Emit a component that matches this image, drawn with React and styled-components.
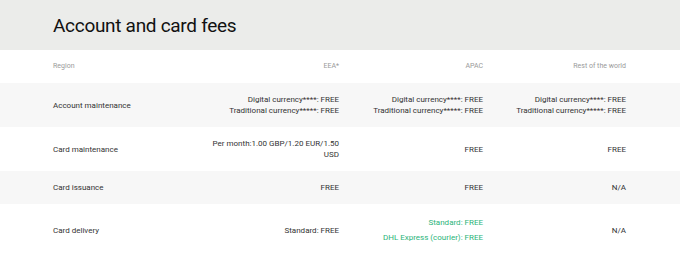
import React from 'react';
import styled, { createGlobalStyle } from 'styled-components';

const rows = [
  {
    label: 'Account maintenance',
    striped: true,
    cells: [
      ['Digital currency****: FREE', 'Traditional currency*****: FREE'],
      ['Digital currency****: FREE', 'Traditional currency*****: FREE'],
      ['Digital currency****: FREE', 'Traditional currency*****: FREE'],
    ],
  },
  {
    label: 'Card maintenance',
    cells: [['Per month:1.00 GBP/1.20 EUR/1.50', 'USD'], ['FREE'], ['FREE']],
  },
  {
    label: 'Card issuance',
    striped: true,
    cells: [['FREE'], ['FREE'], ['N/A']],
  },
  {
    label: 'Card delivery',
    cells: [['Standard: FREE'], ['Standard: FREE', 'DHL Express (courier): FREE'], ['N/A']],
    green: [false, true, false],
  },
];

function App() {
  return (
    <>
      <GlobalStyle />
      <Banner>
        <Title>Account and card fees</Title>
      </Banner>
      <Row>
        <HeadCell>Region</HeadCell>
        <HeadCell $right>EEA*</HeadCell>
        <HeadCell $right>APAC</HeadCell>
        <HeadCell $right>Rest of the world</HeadCell>
      </Row>
      {rows.map((row) => (
        <Row key={row.label} $striped={row.striped}>
          <Label>{row.label}</Label>
          {row.cells.map((lines, i) => {
            const green = row.green && row.green[i];
            return (
              <Cell key={i} $green={green}>
                {lines.map((line) => (
                  <Line key={line} $green={green}>{line}</Line>
                ))}
              </Cell>
            );
          })}
        </Row>
      ))}
    </>
  );
}

export default App;

const GlobalStyle = createGlobalStyle`
  body {
    margin: 0;
    background: #fff;
    font-family: Roboto, 'Liberation Sans', sans-serif;
    color: #333;
  }
`;

const Banner = styled.div`
  background: #ebecea;
  height: 50px;
  padding: 0 53px;
  display: flex;
  align-items: center;
`;

const Title = styled.h1`
  margin: 0;
  font-size: 19px;
  font-weight: 400;
  letter-spacing: -0.3px;
  color: #111;
`;

const Row = styled.div`
  display: grid;
  grid-template-columns: 142px 144px 144px 143px;
  align-items: center;
  padding: 11px 54px 11px 53px;
  min-height: 11px;
  background: ${(p) => (p.$striped ? '#f7f7f7' : '#fff')};
`;

const HeadCell = styled.div`
  font-size: 7px;
  line-height: 11px;
  color: #9a9a9a;
  text-align: ${(p) => (p.$right ? 'right' : 'left')};
`;

const Label = styled.div`
  font-size: 8px;
  line-height: 11px;
`;

const Cell = styled.div`
  font-size: 8px;
  line-height: 11px;
  text-align: right;
  display: flex;
  flex-direction: column;
  color: ${(p) => (p.$green ? '#2bb47a' : '#333')};
`;

const Line = styled.div`
  white-space: nowrap;
  padding: ${(p) => (p.$green ? '2px 0' : '0')};
`;
